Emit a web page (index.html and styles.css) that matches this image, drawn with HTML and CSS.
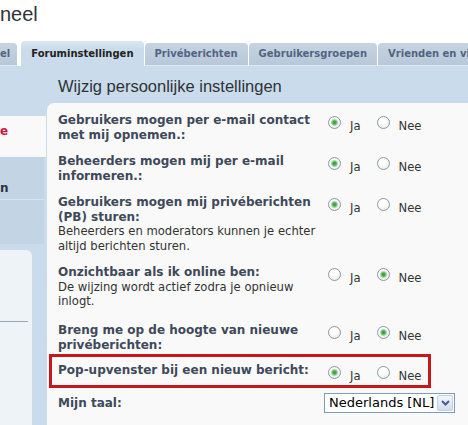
FILE: index.html
```html
<!DOCTYPE html>
<html lang="nl">
<head>
<meta charset="utf-8">
<title>Gebruikerspaneel</title>
<link rel="stylesheet" href="styles.css">
</head>
<body>
<h2 class="title">neel</h2>
<ul class="tabs">
  <li class="tab tab-cut">el</li>
  <li class="tab active">Foruminstellingen</li>
  <li class="tab">Privéberichten</li>
  <li class="tab">Gebruikersgroepen</li>
  <li class="tab">Vrienden en vijanden</li>
</ul>
<div class="main">
  <nav class="sidebar">
    <ul class="nav">
      <li class="nav-item current">e</li>
      <li class="nav-item second">n</li>
      <li class="nav-item third"></li>
    </ul>
    <div class="friends"><hr class="friends-rule"></div>
  </nav>
  <section class="content">
    <h3 class="heading">Wijzig persoonlijke instellingen</h3>
    <div class="panel">
      <div class="row">
        <div class="label">Gebruikers mogen per e-mail contact met mij opnemen.:</div>
        <div class="options">
          <label class="opt"><input type="radio" class="radio" name="r1" checked><span class="opt-text">Ja</span></label>
          <label class="opt"><input type="radio" class="radio" name="r1"><span class="opt-text">Nee</span></label>
        </div>
      </div>
      <div class="row">
        <div class="label">Beheerders mogen mij per e-mail informeren.:</div>
        <div class="options">
          <label class="opt"><input type="radio" class="radio" name="r2" checked><span class="opt-text">Ja</span></label>
          <label class="opt"><input type="radio" class="radio" name="r2"><span class="opt-text">Nee</span></label>
        </div>
      </div>
      <div class="row">
        <div class="label">Gebruikers mogen mij privéberichten (PB) sturen:<span class="desc">Beheerders en moderators kunnen je echter altijd berichten sturen.</span></div>
        <div class="options">
          <label class="opt"><input type="radio" class="radio" name="r3" checked><span class="opt-text">Ja</span></label>
          <label class="opt"><input type="radio" class="radio" name="r3"><span class="opt-text">Nee</span></label>
        </div>
      </div>
      <div class="row">
        <div class="label">Onzichtbaar als ik online ben:<span class="desc">De wijzing wordt actief zodra je opnieuw inlogt.</span></div>
        <div class="options">
          <label class="opt"><input type="radio" class="radio" name="r4"><span class="opt-text">Ja</span></label>
          <label class="opt"><input type="radio" class="radio" name="r4" checked><span class="opt-text">Nee</span></label>
        </div>
      </div>
      <div class="row row-after">
        <div class="label">Breng me op de hoogte van nieuwe privéberichten:</div>
        <div class="options">
          <label class="opt"><input type="radio" class="radio" name="r5"><span class="opt-text">Ja</span></label>
          <label class="opt"><input type="radio" class="radio" name="r5" checked><span class="opt-text">Nee</span></label>
        </div>
      </div>
      <div class="row highlight">
        <div class="label">Pop-upvenster bij een nieuw bericht:</div>
        <div class="options">
          <label class="opt"><input type="radio" class="radio" name="r6" checked><span class="opt-text">Ja</span></label>
          <label class="opt"><input type="radio" class="radio" name="r6"><span class="opt-text">Nee</span></label>
        </div>
      </div>
      <div class="row row-lang">
        <div class="label">Mijn taal:</div>
        <div class="options">
          <div class="select" role="combobox" aria-expanded="false">
            <span class="select-text">Nederlands [NL]</span>
            <span class="select-btn"><svg width="9" height="6" viewBox="0 0 9 6"><path d="M1 1 L4.5 4.5 L8 1" fill="none" stroke="#4a5e86" stroke-width="2"/></svg></span>
          </div>
        </div>
      </div>
    </div>
  </section>
</div>
</body>
</html>
```
FILE: styles.css
```css
* { box-sizing: border-box; }
html, body { margin: 0; padding: 0; overflow: hidden; }
body {
  width: 468px;
  height: 425px;
  background: #ffffff;
  font-family: "DejaVu Sans", Verdana, sans-serif;
  color: #333333;
}
.title {
  margin: 2px 0 0;
  font: normal 20px/24px "Liberation Sans", Arial, sans-serif;
  color: #2f3339;
}
.tabs {
  list-style: none;
  margin: 15px 0 0;
  padding: 0;
  display: flex;
  align-items: flex-end;
  height: 25px;
  overflow: hidden;
  white-space: nowrap;
}
.tab {
  flex: none;
  height: 23px;
  line-height: 22px;
  padding: 0 10px;
  margin-right: 1px;
  background: linear-gradient(#c6d4e2, #b8c8d9);
  border-bottom: 1px solid #dfe7ef;
  border-radius: 4px 4px 0 0;
  font-weight: bold;
  font-size: 10px;
  color: #536482;
}
.tab-cut {
  padding: 0 7px 0 0;
  margin-right: 4px;
  border-radius: 0 4px 0 0;
}
.tab.active {
  height: 25px;
  line-height: 24px;
  padding: 1px 10px 0;
  background: linear-gradient(#dde7f1, #cadceb 8px);
  border-bottom: 0;
  color: #222222;
}
.main {
  display: flex;
  background: #cadceb;
  height: 359px;
}
.sidebar {
  width: 47px;
  flex: none;
  padding-top: 50px;
}
.nav {
  list-style: none;
  margin: 0;
  padding: 0;
  width: 44px;
}
.nav-item {
  background: #c3d4e5;
  font-weight: bold;
  font-size: 12px;
  line-height: 15px;
  color: #2e3440;
}
.nav-item.current {
  width: 46px;
  height: 41px;
  padding-top: 8px;
  background: #f9f9f9;
  color: #d31141;
}
.nav-item.second {
  height: 43px;
  padding-top: 24px;
  border-bottom: 1px solid #d8e3ee;
}
.nav-item.third {
  height: 44px;
}
.friends {
  margin-top: 6px;
  width: 32px;
  height: 180px;
  padding-top: 71px;
  background: #eef3f8;
  border-radius: 0 6px 0 0;
}
.friends-rule {
  margin: 0;
  width: 28px;
  border: 0;
  border-top: 1px solid #9ba7b3;
}
.content {
  flex: 1;
  min-width: 0;
}
.heading {
  margin: 10px 0 7px 11px;
  font: normal 16.5px/20px "Liberation Sans", Arial, sans-serif;
  color: #2e3238;
}
.panel {
  background: #f9f9f9;
  border-top-left-radius: 7px;
  padding: 10px 0 0 11px;
  height: 330px;
}
.row {
  display: grid;
  grid-template-columns: 265px auto;
  margin-top: 12px;
  line-height: 14.5px;
}
.row:first-child { margin-top: 0; }
.row-after { margin-top: 14.5px; }
.label {
  font-weight: bold;
  font-size: 12px;
  color: #3e495a;
}
.desc {
  display: block;
  font-weight: normal;
  font-size: 11.6px;
  color: #333333;
}
.options {
  display: flex;
  align-items: flex-start;
  padding-left: 5px;
}
.opt {
  display: flex;
  align-items: flex-start;
  margin-right: 16px;
}
.opt-text {
  margin-left: 9px;
  padding-top: 5.7px;
  font-size: 11.6px;
  line-height: 14.5px;
  color: #333333;
}
.radio {
  -webkit-appearance: none;
  appearance: none;
  flex: none;
  width: 13px;
  height: 13px;
  margin: 3px 0 0;
  border: 1px solid #8d97a1;
  border-radius: 50%;
  background: radial-gradient(circle at 40% 35%, #ffffff 30%, #e2e4e4 100%);
}
.radio:checked {
  background:
    radial-gradient(circle, #3a9a3a 0, #4cad4c 1.6px, #a8daa8 3px, rgba(255,255,255,0) 4px),
    radial-gradient(circle at 40% 35%, #ffffff 30%, #e2e4e4 100%);
}
.highlight {
  width: 382px;
  margin: 1.5px 0 0 -9px;
  padding: 6.75px 0 2px 6px;
  border: 3px solid #c8161d;
}
.row-lang {
  margin-top: 5px;
  align-items: center;
}
.row-lang .options { padding-left: 1px; }
.select {
  display: flex;
  align-items: center;
  width: 131px;
  height: 20px;
  border: 1px solid #7f9db9;
  background: #ffffff;
}
.select-text {
  flex: 1;
  padding-left: 4px;
  font-size: 13px;
  line-height: 18px;
  color: #000000;
  white-space: nowrap;
}
.select-btn {
  display: flex;
  align-items: center;
  justify-content: center;
  width: 16px;
  height: 16px;
  margin-right: 1px;
  border: 1px solid #c3cfe5;
  border-radius: 2px;
  background: linear-gradient(#f3f6fc, #d3dcee);
}
```
